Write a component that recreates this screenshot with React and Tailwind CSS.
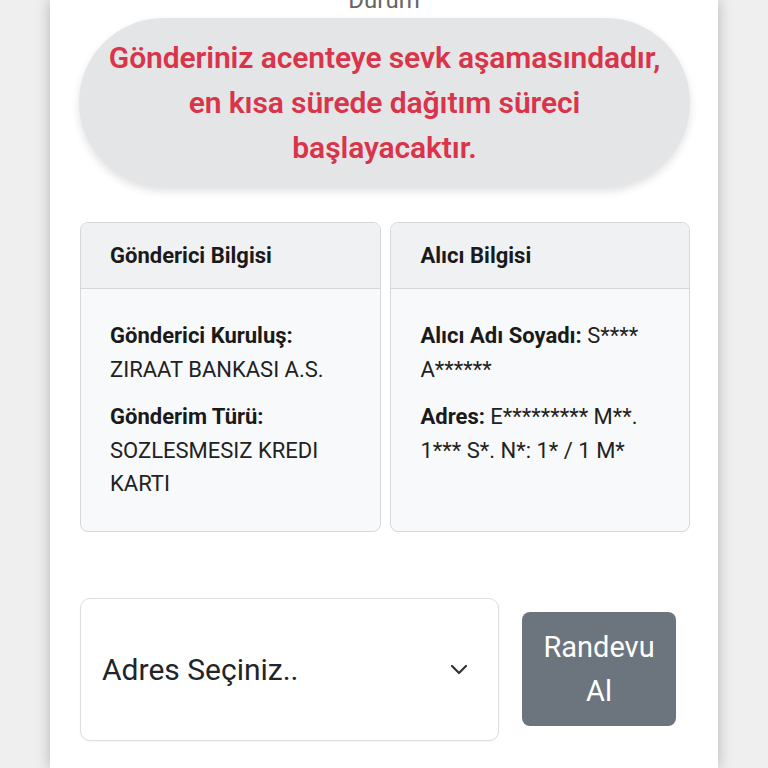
export default function App() {
  const f = { fontFamily: 'Roboto, "Noto Sans", Arial, sans-serif' };
  return (
    <div className="min-h-[768px] w-full bg-[#efefef] flex justify-center overflow-hidden" style={f}>
      <div className="w-[668px] h-[768px] bg-white shadow-[0_0_14px_rgba(0,0,0,0.25)] px-[29px] overflow-hidden">
        <div className="-mt-[14px] h-[32px] text-center text-[24px] leading-[28px] text-[#666]">Durum</div>
        <div className="w-[611px] rounded-full bg-[#e4e5e7] shadow-[0_4px_8px_rgba(0,0,0,0.12)] py-[17px] text-center text-[30px] leading-[45px] font-semibold text-[#d9344a] tracking-[-0.1px]">
          Gönderiniz acenteye sevk aşamasındadır,<br />en kısa sürede dağıtım süreci<br />başlayacaktır.
        </div>
        <div className="mt-[35px] ml-[1px] w-[610px] grid grid-cols-2 gap-[9px]">
          <div className="rounded-[8px] border border-[#d6d7d9] bg-[#f8f9fa] overflow-hidden">
            <div className="h-[66px] flex items-center px-[29px] bg-[#f0f1f3] border-b border-[#d6d7d9] text-[22px] font-bold text-[#1a1a1a]">Gönderici Bilgisi</div>
            <div className="px-[29px] pt-[30px] pb-[30px] text-[22px] leading-[33.5px] text-[#222]">
              <div>
                <div className="font-bold text-[#1a1a1a]">Gönderici Kuruluş:</div>
                <div>ZIRAAT BANKASI A.S.</div>
              </div>
              <div className="mt-[14px]">
                <div className="font-bold text-[#1a1a1a]">Gönderim Türü:</div>
                <div>SOZLESMESIZ KREDI KARTI</div>
              </div>
            </div>
          </div>
          <div className="rounded-[8px] border border-[#d6d7d9] bg-[#f8f9fa] overflow-hidden">
            <div className="h-[66px] flex items-center px-[30px] bg-[#f0f1f3] border-b border-[#d6d7d9] text-[22px] font-bold text-[#1a1a1a]">Alıcı Bilgisi</div>
            <div className="px-[30px] pt-[30px] pb-[30px] text-[22px] leading-[33.5px] text-[#222]">
              <div>
                <span className="font-bold text-[#1a1a1a]">Alıcı Adı Soyadı:</span> S****<br />A******
              </div>
              <div className="mt-[14px]">
                <span className="font-bold text-[#1a1a1a]">Adres:</span> E********* M**.<br />1*** S*. N*: 1* / 1 M*
              </div>
            </div>
          </div>
        </div>
        <div className="mt-[66px] ml-[1px] flex items-center gap-[23px]">
          <div className="w-[419px] h-[143px] rounded-[10px] border border-[#dedede] bg-white flex items-center justify-between pl-[21px] pr-[30px] shadow-[0_1px_2px_rgba(0,0,0,0.04)]">
            <span className="text-[30px] text-[#212529]">Adres Seçiniz..</span>
            <svg width="18" height="11" viewBox="0 0 18 11" fill="none">
              <path d="M2 2l7 7 7-7" stroke="#333" strokeWidth="2.2" strokeLinecap="round" strokeLinejoin="round" />
            </svg>
          </div>
          <button className="w-[154px] h-[114px] rounded-[8px] bg-[#6c757d] text-white text-[29px] leading-[44px] px-[10px] text-center">
            Randevu<br />Al
          </button>
        </div>
      </div>
    </div>
  );
}
